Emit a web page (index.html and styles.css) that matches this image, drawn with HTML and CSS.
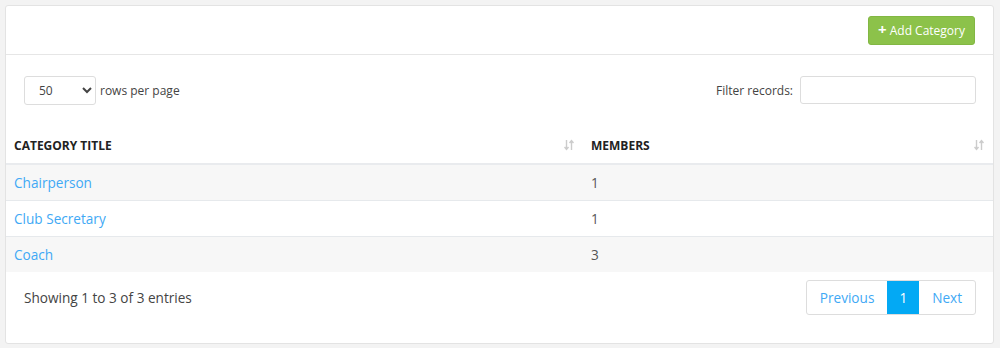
FILE: index.html
```html
<!DOCTYPE html>
<html>
<head>
    <title>Categories</title>
    <link rel="stylesheet" href="styles.css">
</head>
<body>
    <div class="card">
        <div class="card-header">
            <button class="btn-add"><span class="plus">+</span> Add Category</button>
        </div>
        <div class="toolbar">
            <div class="length">
                <select class="rows-select">
                    <option>50</option>
                </select>
                <span>rows per page</span>
            </div>
            <div class="filter">
                <label for="filter">Filter records:</label>
                <input type="text" id="filter">
            </div>
        </div>
        <table class="data-table">
            <thead>
                <tr>
                    <th class="col-title">Category Title <span class="sort"><svg width="10" height="12" viewBox="0 0 10 12"><path d="M2.5 1v9M0.5 8l2 2.5 2-2.5" stroke="#ccc" stroke-width="1.4" fill="none"/><path d="M7.5 11V2M5.5 4l2-2.5 2 2.5" stroke="#ccc" stroke-width="1.4" fill="none"/></svg></span></th>
                    <th>Members <span class="sort"><svg width="10" height="12" viewBox="0 0 10 12"><path d="M2.5 1v9M0.5 8l2 2.5 2-2.5" stroke="#ccc" stroke-width="1.4" fill="none"/><path d="M7.5 11V2M5.5 4l2-2.5 2 2.5" stroke="#ccc" stroke-width="1.4" fill="none"/></svg></span></th>
                </tr>
            </thead>
            <tbody>
                <tr><td><a href="#">Chairperson</a></td><td>1</td></tr>
                <tr><td><a href="#">Club Secretary</a></td><td>1</td></tr>
                <tr><td><a href="#">Coach</a></td><td>3</td></tr>
            </tbody>
        </table>
        <div class="footer">
            <div class="info">Showing 1 to 3 of 3 entries</div>
            <div class="pagination">
                <a href="#" class="page">Previous</a>
                <a href="#" class="page active">1</a>
                <a href="#" class="page">Next</a>
            </div>
        </div>
    </div>
</body>
</html>
```

FILE: styles.css
```css
body {
    margin: 0;
    padding: 5px 6px 5px 5px;
    background: #f3f3f3;
    font-family: "Open Sans", sans-serif;
    font-size: 13.6px;
    color: #555;
}
.card {
    background: #fff;
    border: 1px solid #e3e3e3;
    border-radius: 3px;
    height: 339px;
    box-sizing: border-box;
}
.card-header {
    display: flex;
    justify-content: flex-end;
    padding: 10px 18px 9px;
    border-bottom: 1px solid #e6e6e6;
}
.btn-add {
    background: #8cc24a;
    color: #fff;
    border: 1px solid #82b743;
    border-radius: 3px;
    font-family: "Open Sans", sans-serif;
    font-size: 12px;
    height: 29px;
    padding: 0 9px;
    cursor: pointer;
}
.plus {
    font-weight: bold;
    font-size: 15px;
    line-height: 1;
}
.toolbar {
    display: flex;
    justify-content: space-between;
    align-items: center;
    padding: 21px 17px 0 18px;
    height: 28px;
}
.length {
    display: flex;
    align-items: center;
    gap: 4px;
    font-size: 12px;
    color: #444;
}
.rows-select {
    width: 72px;
    height: 29px;
    border: 1px solid #ddd;
    border-radius: 3px;
    background: #fff;
    font-family: "Open Sans", sans-serif;
    font-size: 12px;
    color: #444;
    padding-left: 10px;
}
.filter {
    display: flex;
    align-items: center;
    gap: 7px;
    font-size: 12px;
    color: #444;
}
.filter input {
    width: 176px;
    height: 28px;
    box-sizing: border-box;
    border: 1px solid #ddd;
    border-radius: 3px;
}
.data-table {
    width: 100%;
    border-collapse: collapse;
    margin-top: 22px;
}
.data-table th {
    text-align: left;
    font-size: 12px;
    font-weight: bold;
    color: #222;
    text-transform: uppercase;
    padding: 11px 8px 9px;
    border-bottom: 2px solid #e9ebee;
    position: relative;
}
.data-table th.col-title {
    width: 561px;
}
.sort {
    position: absolute;
    right: 9px;
    top: 12px;
}
.data-table td {
    padding: 0 8px;
    height: 35px;
    border-bottom: 1px solid #e6e9ec;
    color: #555;
}
.data-table tbody tr:nth-child(odd) td {
    background: #f7f7f7;
}
.data-table tbody tr:last-child td {
    border-bottom: none;
}
.data-table a {
    color: #3fa9f5;
    text-decoration: none;
}
.footer {
    display: flex;
    justify-content: space-between;
    align-items: center;
    padding: 8px 17px 0 18px;
}
.info {
    color: #444;
}
.pagination {
    display: flex;
    border: 1px solid #ddd;
    border-radius: 3px;
    height: 35px;
    box-sizing: border-box;
}
.page {
    display: flex;
    align-items: center;
    padding: 0 13px;
    color: #3fa9f5;
    text-decoration: none;
}
.page.active {
    background: #03a9f4;
    color: #fff;
    padding: 0 12px;
}
```
